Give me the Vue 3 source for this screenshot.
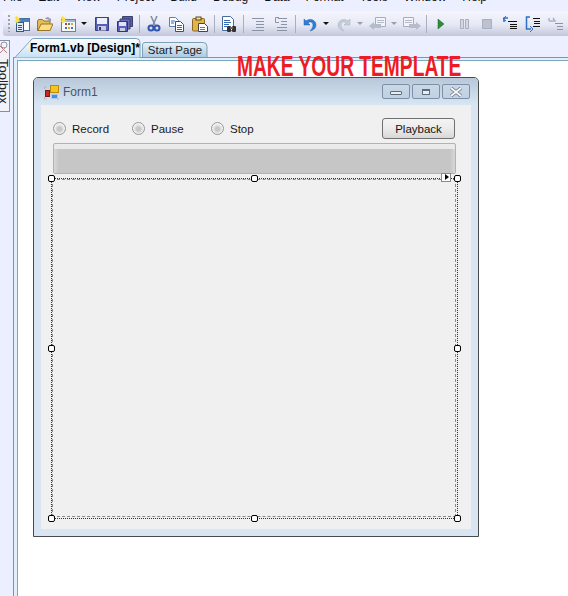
<template>
  <div class="ide">
    <div class="menubar">
      <span v-for="m in menus" :key="m">{{ m }}</span>
    </div>

    <div class="toolbar">
      <i class="grip"></i>
      <button class="tool">
        <svg width="16" height="16" viewBox="0 0 16 16">
          <rect x="3.500" y="2.500" width="12" height="12" fill="#fff" stroke="#4c6f96" />
          <rect x="4" y="3" width="11" height="3" fill="#3f86cf" />
          <rect x="2.500" y="6.500" width="7" height="9" fill="#dfeaf7" stroke="#34587f" />
          <path d="M4 9.500h4M4 11.500h4M4 13.500h4" stroke="#34587f" />
          <path d="M3 0l1 2 2-1-1 3 2 1-3 1-1 2-1-2-2-1 2-1-1-3z" fill="#f6e04d" />
        </svg>
      </button>
      <button class="tool">
        <svg width="16" height="16" viewBox="0 0 16 16">
          <path d="M.5 14.500V5l1-1.500h4L7 5h6v9.500z" fill="#e6bb52" stroke="#96742a" />
          <path d="M1 14.500 4 8h12l-3 6.500z" fill="#fbdd85" stroke="#96742a" />
          <path d="M8 3c1-2 4-2.500 5 0l1-1v3h-3l1-1c-1-1-2-1-4-1z" fill="#8f9bb0" />
        </svg>
      </button>
      <button class="tool">
        <svg width="16" height="16" viewBox="0 0 16 16">
          <rect x="1.500" y="3.500" width="14" height="12" fill="#f6f7fb" stroke="#6f7f96" />
          <rect x="2" y="4" width="13" height="2" fill="#9db8d8" />
          <rect x="5" y="7" width="2" height="2" fill="#d9352b" />
          <rect x="8" y="7" width="2" height="2" fill="#3f9b3f" />
          <rect x="11" y="7" width="2" height="2" fill="#e8a020" />
          <rect x="5" y="11" width="2" height="2" fill="#3f6fc9" />
          <rect x="8" y="11" width="2" height="2" fill="#e8a020" />
          <rect x="11" y="11" width="2" height="2" fill="#3f6fc9" />
          <path d="M3 0l1 2 2-1-1 3 2 1-3 1-1 2-1-2-2-1 2-1-1-3z" fill="#f6e04d" />
        </svg>
      </button>
      <i class="drop"></i>
      <button class="tool">
        <svg width="16" height="16" viewBox="0 0 16 16">
          <path d="M1.500 1.500h13v13h-13z" fill="#5a5fb8" stroke="#3b3f8a" />
          <rect x="3" y="2" width="10" height="6" fill="#eef1fb" />
          <rect x="4" y="10" width="8" height="4.500" fill="#c9cde0" />
          <rect x="5" y="11" width="2" height="3" fill="#333a6e" />
        </svg>
      </button>
      <button class="tool">
        <svg width="16" height="16" viewBox="0 0 16 16">
          <path d="M5.500.5h10v10h-10z" fill="#5a5fa0" stroke="#3b3f70" />
          <path d="M3 3h10v10H3z" fill="#6a6fb0" stroke="#3b3f70" />
          <path d="M.5 5.500h10v10H.5z" fill="#5a5fb8" stroke="#333768" />
          <rect x="2" y="6" width="7" height="4" fill="#dfe3f5" />
          <rect x="3" y="12" width="5" height="3" fill="#c9cde0" />
        </svg>
      </button>
      <i class="sep"></i>
      <button class="tool">
        <svg width="16" height="16" viewBox="0 0 16 16">
          <path d="M5 0l4 9M11 0L7 9" stroke="#7f8da0" stroke-width="1.500" fill="none" />
          <circle cx="5" cy="12" r="2.500" fill="none" stroke="#2f55b0" stroke-width="2" />
          <circle cx="11" cy="12" r="2.500" fill="none" stroke="#2f55b0" stroke-width="2" />
        </svg>
      </button>
      <button class="tool">
        <svg width="16" height="16" viewBox="0 0 16 16">
          <path d="M.5 1.500h6l3 3v6h-9z" fill="#fff" stroke="#5a7fb5" />
          <path d="M6.500 5.500h5l3 3v7h-8z" fill="#fff" stroke="#2f4f8f" />
          <path d="M2 5h4M2 7h3M8 9.500h5M8 11.500h5M8 13.500h5" stroke="#3468b8" />
        </svg>
      </button>
      <button class="tool">
        <svg width="16" height="16" viewBox="0 0 16 16">
          <rect x=".5" y="2.500" width="12" height="12.500" rx="1" fill="#e4b44a" stroke="#8a6a20" />
          <rect x="4" y="1" width="5" height="3" fill="#f2e0a8" stroke="#5a4a20" />
          <path d="M6.500 7.500h6l3 3v5h-9z" fill="#fff" stroke="#444" />
          <path d="M8 11.500h5M8 13.500h5" stroke="#777" />
        </svg>
      </button>
      <i class="sep"></i>
      <button class="tool">
        <svg width="16" height="16" viewBox="0 0 16 16">
          <path d="M1.500.5h8l3 3v11h-11z" fill="#fff" stroke="#4a6a9a" />
          <path d="M3 4.500h6M3 6.500h7M3 8.500h5M3 10.500h3" stroke="#3468b8" />
          <rect x="6" y="10" width="4" height="6" rx="1" fill="#333" />
          <rect x="11" y="10" width="4" height="6" rx="1" fill="#333" />
          <rect x="9" y="11" width="3" height="2" fill="#666" />
        </svg>
      </button>
      <i class="sep"></i>
      <button class="tool">
        <svg width="16" height="16" viewBox="0 0 16 16">
          <path d="M2 2.500h12M6 5.500h8M6 8.500h8M6 11.500h8M2 14.500h12" stroke="#8b93a8" />
        </svg>
      </button>
      <button class="tool">
        <svg width="16" height="16" viewBox="0 0 16 16">
          <path d="M5 2.500h9M8 5.500h6M8 8.500h6M4 11.500h10M4 14.500h10" stroke="#8b93a8" />
          <path d="M6 1.500H2.500v5H6" fill="none" stroke="#8b93a8" />
        </svg>
      </button>
      <i class="sep"></i>
      <button class="tool">
        <svg width="16" height="16" viewBox="0 0 16 16">
          <path d="M2 3v6h6L6 7c2-2 5-1 5 2 0 2-1 4-3 6 4-1 6-3 6-6 0-5-6-7-10-4z" fill="#2f7fd6" stroke="#245fa8" stroke-width=".5" />
        </svg>
      </button>
      <i class="drop"></i>
      <button class="tool">
        <svg width="16" height="16" viewBox="0 0 16 16">
          <path d="M14 3v6H8l2-2C8 5 5 6 5 9c0 2 1 4 3 6-4-1-6-3-6-6 0-5 6-7 10-4z" fill="#c6ccd8" stroke="#a9b0bf" stroke-width=".5" />
        </svg>
      </button>
      <i class="drop off"></i>
      <button class="tool">
        <svg width="18" height="16" viewBox="0 0 18 16">
          <path d="M6.500 1.500h10v9h-10z" fill="#f3f4f9" stroke="#a6adbd" />
          <path d="M8 4.500h7M8 6.500h7" stroke="#b5bbc9" />
          <path d="M0 10l5-4v2h7v4H5v2z" fill="#b5bcca" />
        </svg>
      </button>
      <i class="drop off"></i>
      <button class="tool">
        <svg width="18" height="16" viewBox="0 0 18 16">
          <path d="M.5 1.500h10v9H.5z" fill="#f3f4f9" stroke="#a6adbd" />
          <path d="M2 4.500h7M2 6.500h7" stroke="#b5bbc9" />
          <path d="M18 10l-5-4v2H6v4h7v2z" fill="#b5bcca" />
        </svg>
      </button>
      <i class="sep"></i>
      <button class="tool">
        <svg width="16" height="16" viewBox="0 0 16 16">
          <path d="M5 3l6 5-6 5z" fill="#2e8b3a" stroke="#1c6428" stroke-width=".5" />
        </svg>
      </button>
      <button class="tool">
        <svg width="16" height="16" viewBox="0 0 16 16">
          <path d="M4.500 3.500h3v9h-3zM9.500 3.500h3v9h-3z" fill="#d4d8e2" stroke="#a9afbf" />
        </svg>
      </button>
      <button class="tool">
        <svg width="16" height="16" viewBox="0 0 16 16">
          <path d="M3.500 3.500h9v9h-9z" fill="#bcc2d0" stroke="#a9afbf" />
        </svg>
      </button>
      <button class="tool">
        <svg width="16" height="16" viewBox="0 0 16 16">
          <path d="M6 5.500h9M8 8.500h7M8 10.500h7M8 12.500h7" stroke="#111" />
          <path d="M6 2H2v4" fill="none" stroke="#2f6fc9" stroke-width="1.500" />
          <path d="M4 0L1 3l3 2" fill="none" stroke="#2f6fc9" />
        </svg>
      </button>
      <button class="tool">
        <svg width="16" height="16" viewBox="0 0 16 16">
          <path d="M8 2.500h7M9 5.500h6M9 7.500h6M8 10.500h7" stroke="#111" />
          <path d="M5 1H1.500v12H6" fill="none" stroke="#2f6fc9" stroke-width="1.500" />
          <path d="M5 10l3 3-3 3" fill="none" stroke="#2f6fc9" />
        </svg>
      </button>
      <button class="tool">
        <svg width="16" height="16" viewBox="0 0 16 16">
          <path d="M7 7.500h8M9 10.500h6M9 13.500h6" stroke="#8b93a8" />
          <path d="M1 5h6l-2-3M1 5V2" fill="none" stroke="#a9b4c8" stroke-width="1.500" />
        </svg>
      </button>
    </div>

    <div class="workspace">
      <div class="side">
        <div class="toolbox-tab">
          <svg class="toolbox-ico" width="10" height="15" viewBox="0 0 10 15">
            <path d="M0 5l7 7M0 12l7-7" stroke="#b98088" fill="none" />
            <circle cx="4" cy="4" r="3" fill="none" stroke="#8a93a8" />
          </svg>
          <span>Toolbox</span>
        </div>
      </div>

      <div class="main">
        <div class="tabs">
          <div class="tab active">
            <svg class="tab-shape" width="127" height="20" viewBox="0 0 127 20">
              <defs>
                <linearGradient id="tabOn" x1="0" y1="0" x2="0" y2="1">
                  <stop offset="0" stop-color="#ffffff" />
                  <stop offset="1" stop-color="#c4e0f4" />
                </linearGradient>
              </defs>
              <path d="M.5 20 17 2q1-1.500 3-1.500h102q4 0 4 4V20z" fill="url(#tabOn)" stroke="#7ba3bd" />
            </svg>
            <span>Form1.vb [Design]*</span>
          </div>
          <div class="tab">
            <svg class="tab-shape" width="66" height="16" viewBox="0 0 66 16">
              <defs>
                <linearGradient id="tabOff" x1="0" y1="0" x2="0" y2="1">
                  <stop offset="0" stop-color="#e8f2fa" />
                  <stop offset="1" stop-color="#a9c8de" />
                </linearGradient>
              </defs>
              <path d="M.5 16V3Q.5.5 3 .5h58q4 0 4 4V16z" fill="url(#tabOff)" stroke="#7b9fb5" />
            </svg>
            <span>Start Page</span>
          </div>
        </div>

        <div class="doc">
          <div class="canvas">
            <div class="form">
              <div class="titlebar">
                <svg width="16" height="16" viewBox="0 0 16 16">
                  <path d="M.5 3h2M.5 3v2M.5 13v2h2M13 15h2" stroke="#b5b5b5" fill="none" />
                  <rect x="6.500" y="1.500" width="8" height="7" fill="#f5c518" stroke="#b98a10" />
                  <rect x="1.500" y="6.500" width="4" height="6" fill="#c9281e" stroke="#7a1a14" />
                  <rect x="7.500" y="10.500" width="6" height="4" fill="#4a8de0" stroke="#aac8ee" />
                </svg>
                <span class="title">Form1</span>
                <div class="winbtns">
                  <div class="winbtn"><i class="g-min"></i></div>
                  <div class="winbtn"><i class="g-max"></i></div>
                  <div class="winbtn">
                    <svg width="14" height="10" viewBox="0 0 14 10">
                      <path d="M2 1l10 8M12 1 2 9" stroke="#6f7a88" stroke-width="3.500" />
                      <path d="M2 1l10 8M12 1 2 9" stroke="#f7f9fb" stroke-width="1.800" />
                    </svg>
                  </div>
                </div>
              </div>

              <div class="client">
                <div class="controls">
                  <label v-for="r in radios" :key="r" class="radio">
                    <i class="dot"></i>{{ r }}
                  </label>
                  <button class="playback">Playback</button>
                </div>
                <div class="progress"><div class="fill"></div></div>

                <div class="selected">
                  <div class="panel"></div>
                  <i v-for="h in handles" :key="h" class="handle" :class="h"></i>
                  <i class="smart-tag"></i>
                </div>
              </div>
            </div>
          </div>
        </div>
      </div>
    </div>

    <div class="scrawl"><span>MAKE YOUR TEMPLATE</span></div>
  </div>
</template>

<script setup>
const menus = ['File', 'Edit', 'View', 'Project', 'Build', 'Debug', 'Data', 'Format', 'Tools', 'Window', 'Help']
const radios = ['Record', 'Pause', 'Stop']
const handles = ['tl', 'tc', 'tr', 'ml', 'mr', 'bl', 'bc', 'br']
</script>

<style>
html,
body {
  margin: 0;
  overflow: hidden;
}
</style>

<style scoped>
.ide {
  position: relative;
  width: 568px;
  height: 596px;
  overflow: hidden;
  display: flex;
  flex-direction: column;
  background: #ecefff;
  font-family: 'Liberation Sans', Arial, sans-serif;
}

.menubar {
  height: 11px;
  display: flex;
  gap: 16px;
  padding-left: 3px;
  font-size: 12px;
  line-height: 14px;
  overflow: hidden;
  flex-shrink: 0;
  color: #111;
}
.menubar span {
  margin-top: -10px;
}

.toolbar {
  height: 25px;
  margin-left: 3px;
  padding-left: 5px;
  display: flex;
  align-items: center;
  flex-shrink: 0;
  border-radius: 3px 0 0 3px;
  background: linear-gradient(#f5f6fd, #e6e8f5 55%, #c3c7da);
}
.grip {
  width: 2px;
  height: 17px;
  background: repeating-linear-gradient(#9aa0b5 0 2px, transparent 2px 4px);
}
.tool {
  width: 23px;
  height: 22px;
  padding: 0;
  border: none;
  background: none;
  display: flex;
  align-items: center;
  justify-content: center;
  flex-shrink: 0;
}
.drop {
  width: 11px;
  height: 3px;
  flex-shrink: 0;
  position: relative;
}
.drop::after {
  content: '';
  position: absolute;
  left: 2px;
  top: 0;
  border-left: 3px solid transparent;
  border-right: 3px solid transparent;
  border-top: 3px solid #111;
}
.drop.off::after {
  border-top-color: #9aa0b0;
}
.sep {
  width: 6px;
  height: 18px;
  flex-shrink: 0;
  background: linear-gradient(#a9aec2, #a9aec2) center / 1px 100% no-repeat;
}

.workspace {
  flex: 1;
  display: flex;
  min-height: 0;
}
.side {
  width: 13px;
  flex-shrink: 0;
}
.toolbox-tab {
  width: 10px;
  height: 72px;
  margin-top: 4px;
  box-sizing: border-box;
  border: 1px solid #8a8fa0;
  border-left: none;
  background: #f2f3fa;
  overflow: hidden;
  position: relative;
}
.toolbox-ico {
  display: block;
}
.toolbox-tab span {
  display: block;
  position: absolute;
  left: 9px;
  top: 18px;
  transform-origin: 0 0;
  transform: rotate(90deg);
  font-size: 13px;
  line-height: 12px;
  color: #222;
  white-space: nowrap;
}

.main {
  flex: 1;
  display: flex;
  flex-direction: column;
  min-width: 0;
}
.tabs {
  height: 19px;
  margin: 3px 0 -1px;
  flex-shrink: 0;
  display: flex;
  align-items: flex-end;
  gap: 1px;
  padding-left: 1px;
}
.tab {
  position: relative;
  width: 66px;
  height: 16px;
  font-size: 11.500px;
  color: #1c1c1c;
  line-height: 17px;
  text-align: center;
  white-space: nowrap;
}
.tab.active {
  z-index: 1;
  width: 127px;
  height: 20px;
  line-height: 21px;
  font-size: 12px;
  font-weight: bold;
  color: #000;
  padding-left: 16px;
  box-sizing: border-box;
  text-align: left;
}
.tab-shape {
  position: absolute;
  left: 0;
  top: 0;
}
.tab span {
  position: relative;
}

.doc {
  position: relative;
  flex: 1;
  display: flex;
  min-height: 0;
  border-top: 1px solid #6f9ab5;
  border-left: 1px solid #6f9ab5;
  background: #e0eff9;
  padding: 2px 0 0 3px;
}
.canvas {
  flex: 1;
  border-top: 1px solid #7aa8c0;
  border-left: 1px solid #7aa8c0;
  background: #fff;
  padding: 16px 0 0 15px;
}

.form {
  width: 446px;
  height: 460px;
  box-sizing: border-box;
  border: 1px solid #4a4a4a;
  border-radius: 5px 5px 0 0;
  background: #d9e5f3;
  display: flex;
  flex-direction: column;
}

.titlebar {
  height: 27px;
  flex-shrink: 0;
  display: flex;
  align-items: center;
  padding: 0 8px 0 10px;
  border-radius: 4px 4px 0 0;
  background: linear-gradient(#b8c8d9, #d8e6f4);
}
.title {
  margin-left: 3px;
  font-size: 12px;
  color: #4a5563;
}
.winbtns {
  margin-left: auto;
  display: flex;
  gap: 2px;
}
.winbtn {
  width: 28px;
  height: 15px;
  box-sizing: border-box;
  border: 1px solid #7d90a8;
  border-radius: 2px;
  background: linear-gradient(#cad8e6, #c0d1e3);
  display: flex;
  align-items: center;
  justify-content: center;
}
.g-min {
  width: 10px;
  height: 2px;
  margin-top: 3px;
  background: #e9eef4;
  border: 1px solid #5f6b7a;
  border-radius: 1px;
}
.g-max {
  width: 6px;
  height: 3px;
  background: #e9eef4;
  border: 2px solid #5f6b7a;
  border-width: 2px 1px 1px;
}

.client {
  flex: 1;
  margin: 0 7px 7px;
  background: #f0f0f0;
  display: flex;
  flex-direction: column;
  min-height: 0;
}
.controls {
  height: 21px;
  margin: 13px 16px 0 12px;
  display: flex;
  align-items: center;
  flex-shrink: 0;
}
.radio {
  display: flex;
  align-items: center;
  width: 79px;
  font-size: 11.500px;
  color: #1a1a1a;
}
.dot {
  width: 13px;
  height: 13px;
  box-sizing: border-box;
  margin-right: 6px;
  border-radius: 50%;
  border: 1px solid #979797;
  background: radial-gradient(circle at 50% 55%, #c8c8c8 0 2px, #e6e6e6 4px, #f8f8f8 6px);
}
.playback {
  margin-left: auto;
  width: 73px;
  height: 21px;
  padding: 0;
  border: 1px solid #707070;
  border-radius: 3px;
  background: linear-gradient(#f4f4f4, #ebebeb 50%, #d8d8d8);
  font-family: inherit;
  font-size: 11.500px;
  color: #111;
}
.progress {
  height: 31px;
  margin: 4px 15px 0 12px;
  box-sizing: border-box;
  flex-shrink: 0;
  border: 1px solid #b2b2b2;
  border-radius: 2px;
  background: linear-gradient(#ececec, #dcdcdc);
  padding: 5px 0 0;
}
.fill {
  height: 100%;
  background: linear-gradient(90deg, #d8d8d8, #c6c6c6 5px, #c6c6c6 calc(100% - 5px), #d8d8d8);
}

.selected {
  position: relative;
  width: 407px;
  height: 341px;
  margin: 4px 0 0 10px;
  box-sizing: border-box;
  border: 1px dotted #333;
}
.panel {
  position: absolute;
  inset: 0 1px 1px 0;
  border: 1px dashed #8a8a8a;
}
.handle {
  position: absolute;
  width: 7px;
  height: 7px;
  box-sizing: border-box;
  border: 1px solid #000;
  border-radius: 2px;
  background: #fff;
}
.tl { left: -4px; top: -4px; }
.tc { left: 199px; top: -4px; }
.tr { right: -4px; top: -4px; }
.ml { left: -4px; top: 166px; }
.mr { right: -4px; top: 166px; }
.bl { left: -4px; bottom: -4px; }
.bc { left: 199px; bottom: -4px; }
.br { right: -4px; bottom: -4px; }

.smart-tag {
  position: absolute;
  right: 6px;
  top: -6px;
  width: 10px;
  height: 9px;
  box-sizing: border-box;
  border: 1px solid #8a8a8a;
  background: #fff;
}
.smart-tag::after {
  content: '';
  position: absolute;
  left: 3px;
  top: 0;
  border-left: 4px solid #000;
  border-top: 3px solid transparent;
  border-bottom: 3px solid transparent;
}

.scrawl {
  position: absolute;
  left: 237px;
  top: 52px;
  width: 225px;
  height: 28px;
}
.scrawl span {
  display: inline-block;
  transform-origin: 0 0;
  transform: scaleX(0.64);
  font-size: 30px;
  line-height: 28px;
  font-weight: bold;
  color: #ed1c24;
  white-space: nowrap;
}
</style>
